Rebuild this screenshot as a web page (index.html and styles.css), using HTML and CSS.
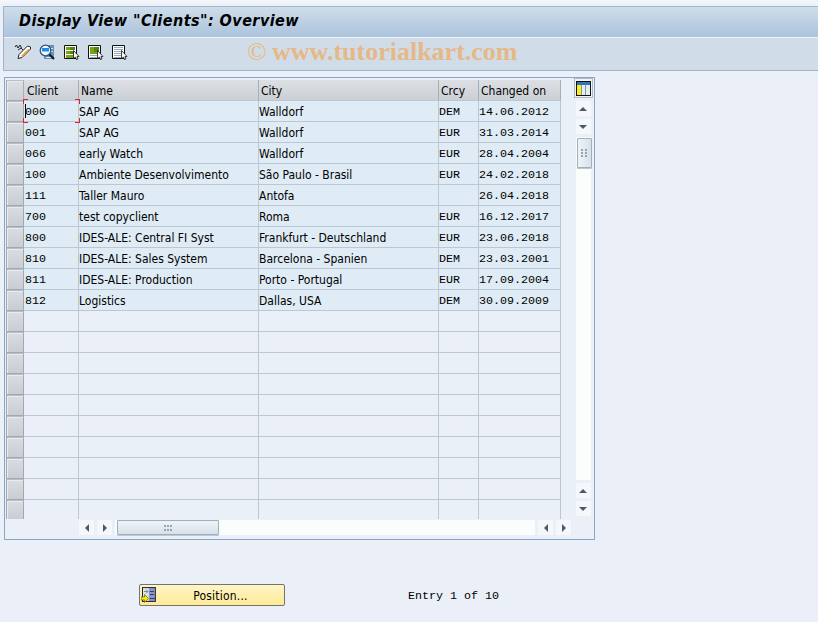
FILE: index.html
```
<!DOCTYPE html>
<html lang="en">
<head>
    <meta charset="UTF-8">
    <title>Display View "Clients": Overview</title>
    <link rel="stylesheet" href="styles.css">
</head>
<body>
    <div class="window">
        <div class="titlebar">
            <h1>Display View "Clients": Overview</h1>
        </div>
        <div class="toolbar">
            <svg class="icon" width="18" height="18" viewBox="0 0 18 18">
                <path d="M1 4l1.500-2 1.500 3 2-3 1.500 3M4 7l3-2 2 2" fill="none" stroke="#222"/>
                <path d="M4 15.500l1-4L13.500 3l3 1v2L8 14.500z" fill="#fff" stroke="#222"/>
                <path d="M7 13l7-7 2 0-7.500 8z" fill="#f0a030"/>
            </svg>
            <svg class="icon" width="18" height="18" viewBox="0 0 18 18">
                <path d="M6 2h10v14H6z" fill="#6f8fb2"/>
                <path d="M13 5.500h2M13 8.500h2M8 14.500h5" stroke="#dbe8f4"/>
                <circle cx="7.500" cy="7.500" r="5.300" fill="#f4f9ff" stroke="#24558c" stroke-width="1.300"/>
                <path d="M4 5h7v3.500H4z" fill="#2689e8"/>
                <path d="M11.500 11.500l4.500 4.500" stroke="#111b35" stroke-width="2.200"/>
            </svg>
            <svg class="icon" width="18" height="18" viewBox="0 0 18 18">
                <path d="M2.500 2.500h12v13h-12z" fill="#fff" stroke="#111"/>
                <path d="M4 4h9v3H4zM4 8h9v3H4zM4 12h9v3H4z" fill="#76a315"/>
                <path d="M8 4h5v3H8zM8 8h4v3H8z" fill="#578310"/>
                <path d="M11.500 7.500v8l2-1.500 1 2.500 1.500-.5-1-2.500h2z" fill="#fff" stroke="#111" stroke-width=".8"/>
            </svg>
            <svg class="icon" width="18" height="18" viewBox="0 0 18 18">
                <path d="M2.500 2.500h12v13h-12z" fill="#fff" stroke="#111"/>
                <path d="M4 4h9v7H4z" fill="#76a315"/>
                <path d="M8 4h5v5H8z" fill="#578310"/>
                <path d="M4 12.500h7M4 14.500h7" stroke="#96adbf"/>
                <path d="M11.500 7.500v8l2-1.500 1 2.500 1.500-.5-1-2.500h2z" fill="#fff" stroke="#111" stroke-width=".8"/>
            </svg>
            <svg class="icon" width="18" height="18" viewBox="0 0 18 18">
                <path d="M2.500 2.500h12v13h-12z" fill="#fff" stroke="#111"/>
                <path d="M4 4.500h9M4 6.500h9M4 8.500h7M4 10.500h7M4 12.500h7M4 14.500h7" stroke="#96adbf"/>
                <path d="M11.500 7.500v8l2-1.500 1 2.500 1.500-.5-1-2.500h2z" fill="#fff" stroke="#111" stroke-width=".8"/>
            </svg>
            <div class="watermark"><span class="copy">©</span><span class="site">www.tutorialkart.com</span></div>
        </div>
    </div>

    <div class="table-box">
        <div class="table-main">
            <div class="table" id="clients">
                <div class="row head">
                    <span class="sel"></span><span>Client</span><span>Name</span><span>City</span><span>Crcy</span><span>Changed on</span>
                </div>
            </div>
            <div class="hscroll">
                <span class="arrow left"></span>
                <span class="arrow right"></span>
                <span class="track"><span class="thumb"><i class="grip"></i></span></span>
                <span class="arrow left"></span>
                <span class="arrow right"></span>
            </div>
        </div>
        <div class="vscroll">
            <span class="config">
                <svg width="15" height="15" viewBox="0 0 15 15" shape-rendering="crispEdges">
                    <path d="M0 0h15v15H0z" fill="#111"/>
                    <path d="M1 1h13v3H1z" fill="#2d76b8"/>
                    <path d="M1 4h13v10H1z" fill="#7d98a8"/>
                    <path d="M1 4h4v10H1z" fill="#ffeb20"/>
                    <path d="M6 4h3v10H6zM10 4h4v10h-4z" fill="#e3edf3"/>
                </svg>
            </span>
            <span class="arrow up"></span>
            <span class="arrow down"></span>
            <span class="track"><span class="thumb"><i class="grip"></i></span></span>
            <span class="arrow up"></span>
            <span class="arrow down"></span>
        </div>
    </div>

    <div class="footer">
        <button class="position-btn">
            <svg width="16" height="16" viewBox="0 0 16 16">
                <path d="M1 0h14v15H1z" fill="#223"/>
                <path d="M2 1h6v13H2z" fill="#dfe5ec"/>
                <path d="M8 1h6v13H8z" fill="#8c96c8"/>
                <path d="M3 4.500h4M5 2.500l2 2-2 2" stroke="#7c8490" fill="none"/>
                <path d="M9 4.500h4M9 7.500h4M9 11.500h5" stroke="#333b55"/>
                <path d="M0 10h3.500V7.500l4 4-4 4V13H0z" fill="#ffe800" stroke="#665c00" stroke-width=".7"/>
            </svg>
            <span>Position...</span>
        </button>
        <span class="entry">Entry 1 of 10</span>
    </div>

    <script src="script.js"></script>
</body>
</html>
```

FILE: styles.css
```
* {
    box-sizing: border-box;
}
body {
    margin: 0;
    padding: 6px 0 0 3px;
    height: 622px;
    overflow: hidden;
    background: linear-gradient(#f3f6fb 0, #ebeff7 6px);
    color: #000;
    font-family: "DejaVu Sans Condensed", "DejaVu Sans", sans-serif;
    font-stretch: condensed;
    font-size: 12px;
}
.window {
    height: 65px;
    border: 1px solid #a0b4cb;
    border-right: none;
}
.titlebar {
    height: 31px;
    background: linear-gradient(#cedde9, #abc3dd);
    border-bottom: 1px solid #edf3f8;
}
h1 {
    margin: 0;
    padding-left: 15px;
    font-size: 16px;
    font-style: italic;
    letter-spacing: 0.45px;
    line-height: 27px;
    white-space: nowrap;
}
.toolbar {
    display: flex;
    height: 32px;
    padding: 5px 0 0 10px;
    gap: 6px;
    background-color: #d0dde8;
}
.watermark {
    display: flex;
    margin-left: 113px;
    height: 24px;
    line-height: 18px;
    color: #e6b887;
    font-family: "Liberation Serif", serif;
    font-size: 26px;
    white-space: nowrap;
}
.copy {
    width: 25px;
}
.site {
    font-weight: bold;
}
.table-box {
    display: flex;
    width: 591px;
    height: 463px;
    margin: 6px 0 0 1px;
    border: 1px solid #88a6c5;
}
.table-main {
    width: 568px;
    padding: 2px 0 0 1px;
}
.table {
    width: 555px;
    height: 439px;
    overflow: hidden;
}
.row {
    display: grid;
    grid-template-columns: 18px 55px 180px 180px 40px 82px;
    grid-template-rows: 21px;
    height: 21px;
    line-height: 22px;
}
.row span {
    border-right: 1px solid #bcc7d6;
    border-bottom: 1px solid #bcc7d6;
    white-space: nowrap;
    position: relative;
}
.row .sel {
    border: 1px solid #9fa9b6;
    border-top-color: #b6bec8;
    background: linear-gradient(#d9dce0, #c9cdd3);
    box-shadow: inset 1px 1px #e9ecef;
}
.row.head span {
    padding-left: 2px;
    border-right-color: #a4afbc;
    background: linear-gradient(#dce0e4, #cbd0d5);
}
.row.head span:nth-child(2) {
    padding-left: 3px;
}
.filled span {
    background-color: #dfebf5;
}
.mono, .entry {
    font-family: "Liberation Mono", monospace;
    font-size: 11.67px;
}
.row .client {
    padding-left: 1px;
}
/* red corner marks of the focused cell */
.focus::before {
    content: "";
    position: absolute;
    inset: -2px -2px -2px -1px;
    --c: linear-gradient(#d22 0 0);
    background:
        var(--c) 0 0 / 5px 1px, var(--c) 0 0 / 1px 5px,
        var(--c) 100% 0 / 5px 1px, var(--c) 100% 0 / 1px 5px,
        var(--c) 0 100% / 5px 1px, var(--c) 0 100% / 1px 5px,
        var(--c) 100% 100% / 5px 1px, var(--c) 100% 100% / 1px 5px;
    background-repeat: no-repeat;
    z-index: 1;
}
.row .focus {
    z-index: 1;
}
.focus::after {
    content: "";
    position: absolute;
    left: 1px;
    top: 3px;
    width: 1px;
    height: 14px;
    background-color: #000;
}
.arrow {
    display: flex;
    align-items: center;
    justify-content: center;
    flex: none;
    width: 15px;
    height: 15px;
    background-color: #f5f8fb;
}
.arrow::before {
    content: "";
    border: 4px solid transparent;
}
.up::before {
    border-bottom-color: #465b6c;
    border-top: none;
}
.down::before {
    border-top-color: #465b6c;
    border-bottom: none;
}
.left::before {
    border-right-color: #465b6c;
    border-left: none;
}
.right::before {
    border-left-color: #465b6c;
    border-right: none;
}
.track {
    flex: 1;
    background-color: #fbfcfc;
}
.thumb {
    display: flex;
    align-items: center;
    justify-content: center;
    border: 1px solid #a0afbb;
    border-radius: 1px;
    box-shadow: 0 1px #bcc7d0;
}
.grip {
    width: 8px;
    height: 6px;
    background: linear-gradient(#95a5b3 0 0) 0 0 / 2px 2px;
    background: conic-gradient(from 0deg at 2px 2px, transparent 270deg, #95a5b3 0) 0 0 / 3px 4px;
}
.hscroll {
    display: flex;
    gap: 3px;
    height: 15px;
    margin: 1px 0 0 73px;
    width: 492px;
}
.hscroll .thumb {
    width: 102px;
    height: 15px;
    margin-left: 2px;
    background: linear-gradient(#eef3f7, #d7e1ea);
}
.vscroll {
    display: flex;
    flex-direction: column;
    align-items: center;
    gap: 3px;
    width: 20px;
    height: 438px;
}
.config {
    display: flex;
    align-items: center;
    justify-content: center;
    width: 19px;
    height: 20px;
    border: 1px solid #b2bac4;
    background-color: #f1f3f5;
}
.vscroll .track {
    width: 15px;
}
.vscroll .thumb {
    width: 15px;
    height: 30px;
    margin: 1px 0 0 1px;
    background: linear-gradient(90deg, #eef3f7, #d7e1ea);
}
.vscroll .grip {
    width: 6px;
    height: 9px;
    background-size: 4px 3px;
}
.footer {
    display: flex;
    align-items: center;
    margin: 44px 0 0 136px;
    height: 22px;
}
.position-btn {
    display: flex;
    align-items: center;
    width: 146px;
    height: 22px;
    padding: 0 0 0 1px;
    border: 1px solid #74746c;
    border-radius: 2px;
    background: linear-gradient(#fff4c8, #fdea96);
    color: #000;
    font: inherit;
}
.position-btn span {
    width: 128px;
    padding-top: 2px;
    letter-spacing: 0.2px;
    text-align: center;
}
.entry {
    margin-left: 123px;
    padding-top: 2px;
}
```

FILE: script.js
```
const clients = [
    ["000", "SAP AG", "Walldorf", "DEM", "14.06.2012"],
    ["001", "SAP AG", "Walldorf", "EUR", "31.03.2014"],
    ["066", "early Watch", "Walldorf", "EUR", "28.04.2004"],
    ["100", "Ambiente Desenvolvimento", "São Paulo - Brasil", "EUR", "24.02.2018"],
    ["111", "Taller Mauro", "Antofa", "", "26.04.2018"],
    ["700", "test copyclient", "Roma", "EUR", "16.12.2017"],
    ["800", "IDES-ALE: Central FI Syst", "Frankfurt - Deutschland", "EUR", "23.06.2018"],
    ["810", "IDES-ALE: Sales System", "Barcelona - Spanien", "DEM", "23.03.2001"],
    ["811", "IDES-ALE: Production", "Porto - Portugal", "EUR", "17.09.2004"],
    ["812", "Logistics", "Dallas, USA", "DEM", "30.09.2009"]
];

const table = document.getElementById("clients");

for (let i = 0; i < 20; i++) {
    const c = clients[i] || ["", "", "", "", ""];
    const row = document.createElement("div");
    row.className = clients[i] ? "row filled" : "row";
    row.innerHTML = `
        <span class="sel"></span>
        <span class="mono client${i === 0 ? " focus" : ""}">${c[0]}</span>
        <span>${c[1]}</span>
        <span>${c[2]}</span>
        <span class="mono">${c[3]}</span>
        <span class="mono">${c[4]}</span>
    `;
    table.appendChild(row);
}
```
